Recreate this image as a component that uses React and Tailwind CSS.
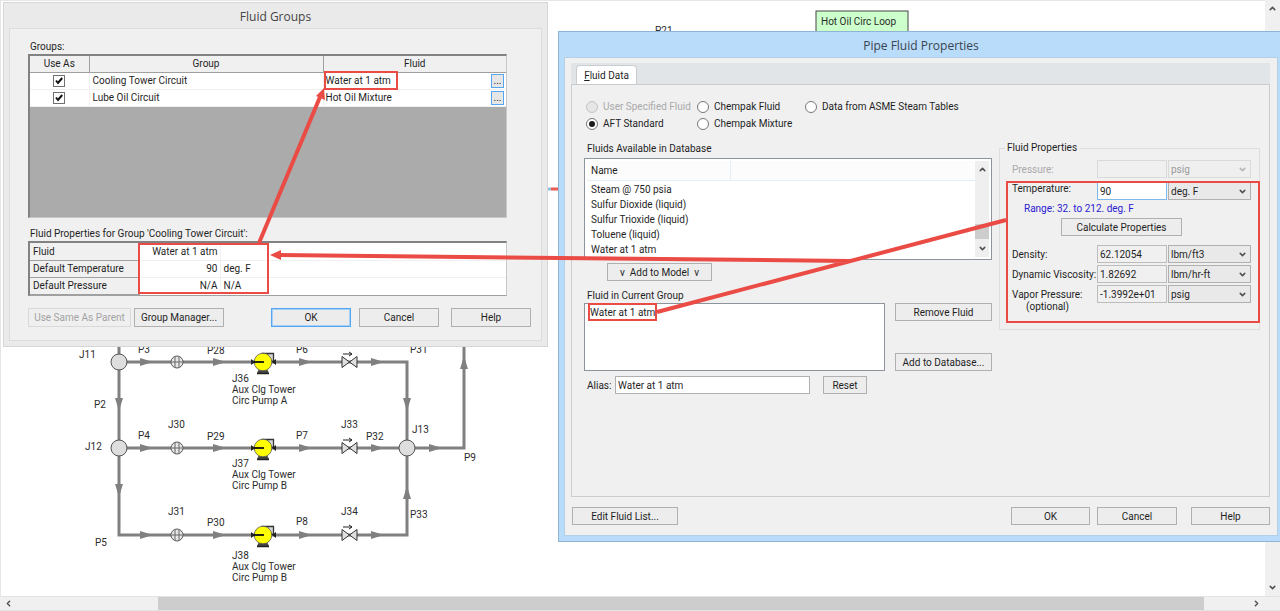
import { FiChevronDown, FiChevronLeft, FiChevronRight, FiChevronUp } from "react-icons/fi";

const groups = [
  { name: "Cooling Tower Circuit", fluid: "Water at 1 atm" },
  { name: "Lube Oil Circuit", fluid: "Hot Oil Mixture" },
];

const groupProperties = [
  { label: "Fluid", value: "Water at 1 atm", unit: "" },
  { label: "Default Temperature", value: "90", unit: "deg. F" },
  { label: "Default Pressure", value: "N/A", unit: "N/A" },
];

const sources = [
  { label: "User Specified Fluid", disabled: true },
  { label: "Chempak Fluid" },
  { label: "Data from ASME Steam Tables" },
  { label: "AFT Standard", checked: true },
  { label: "Chempak Mixture" },
];

const databaseFluids = [
  "Steam @ 750 psia",
  "Sulfur Dioxide (liquid)",
  "Sulfur Trioxide (liquid)",
  "Toluene (liquid)",
  "Water at 1 atm",
];

const pipeLabels = [
  [138, 353, "P3"],
  [207, 354, "P28"],
  [296, 353, "P6"],
  [410, 353, "P31"],
  [94, 408, "P2"],
  [138, 439, "P4"],
  [207, 440, "P29"],
  [296, 439, "P7"],
  [366, 440, "P32"],
  [464, 461, "P9"],
  [95, 546, "P5"],
  [207, 526, "P30"],
  [296, 525, "P8"],
  [410, 518, "P33"],
  [655, 34, "P21"],
  [79, 358, "J11"],
  [85, 450, "J12"],
  [412, 433, "J13"],
  [168, 428, "J30"],
  [168, 515, "J31"],
  [341, 428, "J33"],
  [341, 515, "J34"],
];

const pumps = [
  { y: 362, textY: 382, id: "J36", name: "Circ Pump A" },
  { y: 448, textY: 467, id: "J37", name: "Circ Pump B" },
  { y: 535, textY: 559, id: "J38", name: "Circ Pump B" },
];

const flowArrows = [
  [119, 404, 90],
  [119, 490, 90],
  [407, 404, 90],
  [407, 493, 270],
  [464, 363, 270],
  [435, 448, 0],
];

function Button({ children, className = "", disabled = false, primary = false }) {
  return (
    <button
      type="button"
      disabled={disabled}
      className={`border pt-px text-center leading-4 whitespace-nowrap ${
        disabled
          ? "border-[#d9d9d9] bg-[#efefef] text-[#a3a3a3]"
          : primary
            ? "border-[#55a5f0] bg-[#ececec] ring-1 ring-[#a5d0f7] ring-inset"
            : "border-[#b0b0b0] bg-[#ededed]"
      } ${className}`}
    >
      {children}
    </button>
  );
}

function Checkbox({ label }) {
  return (
    <span className="mx-auto grid size-3">
      <input
        type="checkbox"
        defaultChecked
        aria-label={label}
        className="peer col-start-1 row-start-1 size-3 appearance-none border border-[#707070] bg-white"
      />
      <svg
        viewBox="0 0 12 12"
        className="pointer-events-none invisible col-start-1 row-start-1 size-3 peer-checked:visible"
      >
        <path d="M3 5.5 5 8l4.2-5" fill="none" stroke="#111" strokeWidth="2" />
      </svg>
    </span>
  );
}

function Radio({ label, disabled = false, checked = false }) {
  return (
    <label
      className={`flex h-[17px] items-center gap-[5px] whitespace-nowrap ${disabled ? "text-[#a9a9a9]" : ""}`}
    >
      <input
        type="radio"
        name="source"
        disabled={disabled}
        defaultChecked={checked}
        className="grid size-3 appearance-none place-items-center rounded-full border border-[#777] bg-white before:size-[6px] before:rounded-full checked:before:bg-[#1c1c1c] disabled:border-[#c4c4c4] disabled:bg-[#e6e6e6]"
      />
      {label}
    </label>
  );
}

function UnitSelect({ value, label, disabled = false }) {
  return (
    <span className={`grid h-[18px] w-[83px] items-center ${disabled ? "text-[#9a9a9a]" : ""}`}>
      <select
        aria-label={label}
        disabled={disabled}
        className={`col-start-1 row-start-1 h-[18px] appearance-none border pt-px pl-[2px] ${
          disabled ? "border-[#dadada] bg-[#efefef]" : "border-[#b0b0b0] bg-[#e9e9e9]"
        }`}
      >
        <option>{value}</option>
      </select>
      <FiChevronDown
        strokeWidth={4}
        className={`pointer-events-none col-start-1 row-start-1 mr-1 size-[9px] justify-self-end ${
          disabled ? "text-[#b5b5b5]" : "text-[#505050]"
        }`}
      />
    </span>
  );
}

function PropertyRow({ id, label, value, unit, disabled, editable, className = "", labelClass = "" }) {
  let box = "border-[#bcbcbc] bg-[#f0f0f0]";
  if (disabled) box = "border-[#dadada] bg-[#f0f0f0]";
  if (editable) box = "border-[#7db9ee] bg-white";
  return (
    <div className={`flex h-[18px] gap-px ${className}`}>
      <label
        htmlFor={id}
        className={`w-[84px] shrink-0 leading-3 whitespace-nowrap ${disabled ? "text-[#a9a9a9]" : ""} ${labelClass}`}
      >
        {label}
      </label>
      <input
        id={id}
        defaultValue={value}
        disabled={disabled}
        readOnly={!editable}
        className={`h-[18px] w-[70px] border px-[2px] ${box}`}
      />
      <UnitSelect value={unit} label={`${id} unit`} disabled={disabled} />
    </div>
  );
}

function Pump({ y }) {
  return (
    <g transform={`translate(263 ${y})`}>
      <path d="M-4 7h8l2 4H-6z" fill="#444" />
      <path d="M-6 11.500h12" stroke="#222" strokeWidth="1.500" />
      <path d="M0-8.500h10.500V0L6-3z" fill="#d9d9d9" stroke="#333" strokeWidth="1.300" />
      <circle r="8.800" fill="#ff0" stroke="#555" strokeWidth=".8" />
      <path d="M-9 0H1" stroke="#111" strokeWidth="1.800" />
      <path d="M-12-3l4 3-4 3zM13-3L9 0l4 3z" fill="#222" />
    </g>
  );
}

function Diagram() {
  return (
    <svg
      width="1264"
      height="596"
      className="absolute top-0 left-0"
      fill="#2b2b2b"
    >
      <path
        d="M119 340V535H407V362M119 362H407V448M119 448H464V340"
        fill="none"
        stroke="#808080"
        strokeWidth="3"
      />
      <path d="M547 189h4" stroke="#8fc0dc" strokeWidth="3" />
      <path d="M551 189h8" stroke="#eb5b56" strokeWidth="3" />

      {flowArrows.map(([x, y, angle]) => (
        <path
          key={`${x}-${y}`}
          d="M-6-4L7 0-6 4z"
          fill="#808080"
          transform={`translate(${x} ${y}) rotate(${angle})`}
        />
      ))}

      {pumps.map(({ y, textY, id, name }) => (
        <g key={id}>
          {[146, 219, 305, 377].map((x) => (
            <path key={x} d="M-6-4L7 0-6 4z" fill="#808080" transform={`translate(${x} ${y})`} />
          ))}
          <g transform={`translate(177 ${y})`}>
            <circle r="6" fill="#e6e6e6" stroke="#555" />
            <path d="M-2-5V5M2-5V5M-5 0h3M2 0h3M-2 0h4" stroke="#666" />
          </g>
          <g transform={`translate(349 ${y})`}>
            <path d="M-7-5.500L8 5.500v-11L-7 5.500z" fill="#e0e0e0" stroke="#333" />
            <path d="M-6-8h9M0-10l3 2-3 2" fill="none" stroke="#222" />
          </g>
          <Pump y={y} />
          <text x="232" y={textY}>{id}</text>
          <text x="232" y={textY + 11}>Aux Clg Tower</text>
          <text x="232" y={textY + 22}>{name}</text>
        </g>
      ))}

      {[[119, 362], [119, 448], [407, 448]].map(([x, y]) => (
        <circle key={`${x}-${y}`} cx={x} cy={y} r="8" fill="#dedede" stroke="#555" />
      ))}

      {pipeLabels.map(([x, y, text]) => (
        <text key={text} x={x} y={y}>{text}</text>
      ))}

      <rect x="816" y="11" width="92" height="21" fill="#ccffcc" stroke="#444" />
      <text x="821" y="25">Hot Oil Circ Loop</text>
    </svg>
  );
}

function FluidGroupsWindow() {
  return (
    <section className="absolute top-[2px] left-[3px] w-[545px] border border-[#d6d6d6] bg-[#eaeaea] px-[5px] pb-[5px]">
      <h2 className="h-[25px] text-center font-['Open_Sans',sans-serif] text-[12px] leading-[27px] text-[#444]">
        Fluid Groups
      </h2>
      <div className="border border-[#dcdcdc] bg-[#f0f0f0] pt-[9px] pr-[10px] pb-[13px] pl-[18px]">
        <h3 className="h-4 pl-[2px] leading-[18px]">Groups:</h3>
        <div className="mr-[24px] h-[164px] border-t-2 border-r border-b border-l-2 border-t-[#828282] border-r-[#c8c8c8] border-b-[#c8c8c8] border-l-[#828282] bg-[#ababab]">
          <table className="w-full table-fixed border-collapse">
            <thead className="bg-[#f0f0f0]">
              <tr className="h-4 border-b border-[#a0a0a0]">
                <th className="w-[59px] border-r border-[#a0a0a0] font-normal leading-4">Use As</th>
                <th className="w-[234px] border-r border-[#a0a0a0] font-normal leading-4">Group</th>
                <th className="font-normal leading-4">Fluid</th>
              </tr>
            </thead>
            <tbody className="border-b border-[#828282] bg-white">
              {groups.map((group) => (
                <tr key={group.name} className="h-[17px] border-b border-[#f0f0f0]">
                  <td className="border-r border-[#f0f0f0]">
                    <Checkbox label={`Use ${group.name}`} />
                  </td>
                  <td className="border-r border-[#f0f0f0] pl-[3px] leading-4">{group.name}</td>
                  <td className="pr-[2px] pl-[2px]">
                    <span className="flex h-4 items-center justify-between leading-4">
                      {group.fluid}
                      <button
                        type="button"
                        aria-label={`Choose fluid for ${group.name}`}
                        className="h-[14px] w-[13px] border border-[#55a5f0] bg-[#e6e6e6] leading-[10px]"
                      >
                        ...
                      </button>
                    </span>
                  </td>
                </tr>
              ))}
            </tbody>
          </table>
        </div>

        <h3 className="mt-[7px] h-4 pl-[2px] leading-[18px]">
          Fluid Properties for Group 'Cooling Tower Circuit':
        </h3>
        <div className="mr-[24px] border-t-2 border-r border-b border-l-2 border-t-[#828282] border-r-[#c8c8c8] border-b-[#a0a0a0] border-l-[#828282] bg-white">
          <table className="w-full table-fixed border-collapse">
            <tbody>
              {groupProperties.map((row) => (
                <tr key={row.label} className="h-[17px] border-b border-[#f0f0f0] last:border-b-0">
                  <th className="w-[109px] border-r border-b border-[#a0a0a0] bg-[#f0f0f0] pl-[3px] text-left font-normal leading-[15px]">
                    {row.label}
                  </th>
                  <td className="w-[81px] border-r border-[#f0f0f0] pr-[2px] text-right leading-[15px]">
                    {row.value}
                  </td>
                  <td className="w-[48px] border-r border-[#f0f0f0] pl-[3px] leading-[15px]">{row.unit}</td>
                  <td></td>
                </tr>
              ))}
            </tbody>
          </table>
        </div>

        <div className="mt-[12px] flex">
          <Button disabled className="h-[19px] w-[103px]">Use Same As Parent</Button>
          <Button className="ml-[3px] h-[19px] w-[90px]">Group Manager...</Button>
          <Button primary className="ml-auto h-[19px] w-[80px]">OK</Button>
          <Button className="ml-2 h-[19px] w-[80px]">Cancel</Button>
          <Button className="ml-3 h-[19px] w-[80px]">Help</Button>
        </div>
      </div>
    </section>
  );
}

function FluidDatabase() {
  return (
    <div className="w-[408px] shrink-0">
      <h3 className="h-[18px] pl-[3px] leading-[18px]">Fluids Available in Database</h3>
      <div className="flex h-[102px] border border-[#8e949c] bg-white p-[2px]">
        <div className="flex-1">
          <div className="flex h-5 border-b border-[#e3eef7] bg-[#fcfcfc]">
            <span className="w-[144px] border-r border-[#e3eef7] pl-1 leading-[19px]">Name</span>
          </div>
          <ul className="pt-px pl-1 leading-[15px]">
            {databaseFluids.map((fluid) => (
              <li key={fluid}>{fluid}</li>
            ))}
          </ul>
        </div>
        <div className="flex w-[14px] flex-col items-center justify-between bg-[#efefef] py-1">
          <FiChevronUp strokeWidth={4} className="size-[9px] text-[#505050]" />
          <div className="mt-auto mb-[5px] h-[15px] w-full bg-[#cdcdcd]"></div>
          <FiChevronDown strokeWidth={4} className="size-[9px] text-[#505050]" />
        </div>
      </div>
      <Button className="mt-[3px] ml-[23px] block h-[18px] w-[105px]">v&nbsp; Add to Model &nbsp;v</Button>

      <h3 className="mt-[6px] h-4 pl-[3px] leading-[18px]">Fluid in Current Group</h3>
      <div className="flex gap-[10px]">
        <ul className="h-[68px] flex-1 border border-[#8e949c] bg-white pl-[5px] leading-[18px]">
          <li>Water at 1 atm</li>
        </ul>
        <div className="flex w-[97px] flex-col justify-between">
          <Button className="h-[18px]">Remove Fluid</Button>
          <Button className="h-[18px]">Add to Database...</Button>
        </div>
      </div>
      <div className="mt-[5px] flex items-center">
        <label htmlFor="alias" className="w-[31px] pl-[3px]">Alias:</label>
        <input
          id="alias"
          defaultValue="Water at 1 atm"
          className="h-[18px] w-[195px] border border-[#b0b0b0] bg-white px-[2px]"
        />
        <Button className="ml-[13px] h-[18px] w-[44px]">Reset</Button>
      </div>
    </div>
  );
}

function FluidProperties() {
  return (
    <fieldset className="h-[190px] w-[261px] border border-[#dedede] pl-3">
      <legend className="ml-[-7px] px-[2px] leading-4">Fluid Properties</legend>
      <PropertyRow id="pressure" label="Pressure:" value="" unit="psig" disabled className="mt-1" labelClass="pt-1" />
      <PropertyRow id="temperature" label="Temperature:" value="90" unit="deg. F" editable className="mt-1" labelClass="pt-px" />
      <p className="pl-3 leading-[18px] text-[#2b20d0]">Range: 32. to 212. deg. F</p>
      <Button className="ml-[49px] block h-[18px] w-[121px]">Calculate Properties</Button>
      <PropertyRow id="density" label="Density:" value="62.12054" unit="lbm/ft3" className="mt-[9px]" labelClass="pt-1" />
      <PropertyRow id="viscosity" label="Dynamic Viscosity:" value="1.82692" unit="lbm/hr-ft" className="mt-[2px]" labelClass="pt-1" />
      <PropertyRow
        id="vapor"
        label={<>Vapor Pressure:<br /><span className="pl-[14px]">(optional)</span></>}
        value="-1.3992e+01"
        unit="psig"
        className="mt-[2px]"
        labelClass="pt-1"
      />
    </fieldset>
  );
}

function PipeFluidWindow() {
  return (
    <section className="absolute top-[31px] -right-1 left-[558px] flex h-[511px] flex-col border border-[#8fb5d6] bg-[#b8dcf9] px-[5px] pb-[5px]">
      <h2 className="h-[25px] shrink-0 text-center font-['Open_Sans',sans-serif] text-[12px] leading-[27px] text-[#3a4550]">
        Pipe Fluid Properties
      </h2>
      <div className="flex flex-1 flex-col border border-[#b4cfe6] bg-[#f0f0f0] pt-[5px] pr-[7px] pb-[10px] pl-[6px]">
        <div className="flex h-[21px] items-end bg-[#e1e5e8] pl-[5px]" role="tablist">
          <button
            type="button"
            role="tab"
            aria-selected="true"
            className="-mb-px h-5 w-[61px] rounded-t border border-b-0 border-[#c9cdd0] bg-white leading-4"
          >
            <u>F</u>luid Data
          </button>
        </div>
        <div className="flex-1 border border-[#c9cdd0] pt-[13px] pl-3" role="tabpanel">
          <div className="ml-[2px] grid grid-cols-[111px_108px_auto]">
            {sources.map((source) => (
              <Radio key={source.label} {...source} />
            ))}
          </div>
          <div className="mt-2 flex items-start gap-[7px]">
            <FluidDatabase />
            <FluidProperties />
          </div>
        </div>
        <div className="mt-[10px] flex">
          <Button className="ml-px h-[18px] w-[106px]">Edit Fluid List...</Button>
          <Button className="ml-auto h-[18px] w-[79px]">OK</Button>
          <Button className="ml-[7px] h-[18px] w-[80px]">Cancel</Button>
          <Button className="ml-[14px] h-[18px] w-[79px]">Help</Button>
        </div>
      </div>
    </section>
  );
}

// Callouts that link the same fluid across both dialogs
function Callouts() {
  return (
    <svg
      width="1280"
      height="596"
      className="pointer-events-none absolute top-0 left-0"
      fill="none"
      stroke="#eb4b45"
      strokeWidth="2"
    >
      <rect x="325" y="72" width="72" height="17" />
      <rect x="139" y="244" width="129" height="49" />
      <rect x="589" y="304" width="67" height="16" />
      <rect x="1007" y="182" width="252" height="140" />
      <path d="M259 243L320 97M657 312L1006 220M850 261L279 255" strokeWidth="4" />
      <path d="M324 88l-8 8 9 4zM270 255l11-5v10z" fill="#eb4b45" stroke="none" />
    </svg>
  );
}

function App() {
  return (
    <main className="relative flex h-screen min-h-[600px] flex-col overflow-hidden bg-[#f0f0f0] font-[Roboto,'Liberation_Sans',sans-serif] text-[10px] text-[#1f1f1f]">
      <div className="flex flex-1">
        <div className="flex-1 border-t border-l border-[#e6e6e6] bg-white"></div>
        <div className="flex w-[15px] flex-col items-center justify-between py-1">
          <FiChevronUp strokeWidth={4} className="size-[9px] text-[#505050]" />
          <FiChevronDown strokeWidth={4} className="size-[9px] text-[#505050]" />
        </div>
      </div>
      <div className="flex h-[15px] items-center border-t border-b border-[#e3e3e3] pr-[15px]">
        <FiChevronLeft strokeWidth={4} className="mx-1 size-[9px] text-[#505050]" />
        <div className="flex h-[13px] flex-1">
          <div className="grow-[141]"></div>
          <div className="grow-[1046] bg-[#cdcdcd]"></div>
          <div className="grow-[44]"></div>
        </div>
        <FiChevronRight strokeWidth={4} className="mx-1 size-[9px] text-[#505050]" />
      </div>
      <Diagram />
      <FluidGroupsWindow />
      <PipeFluidWindow />
      <Callouts />
    </main>
  );
}

export default App;
